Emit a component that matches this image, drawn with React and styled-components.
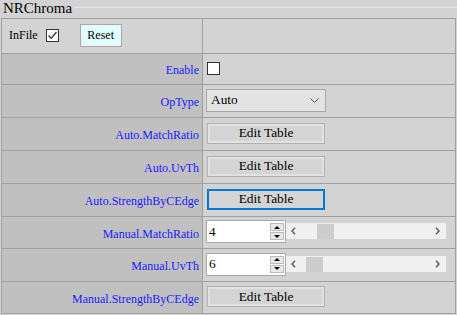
import React from "react";
import styled, { createGlobalStyle, css } from "styled-components";

const GlobalStyle = createGlobalStyle`
  body {
    margin: 0;
    background: #d3d3d3;
    font-family: "Liberation Serif", "Times New Roman", serif;
  }
  button {
    font-family: "Liberation Serif", "Times New Roman", serif;
  }
`;

const Header = styled.div`
  display: flex;
  align-items: flex-start;
  height: 18px;
`;

const Legend = styled.span`
  font-size: 15px;
  line-height: 16px;
  padding: 0 2px 0 3px;
  color: #000;
`;

const Rule = styled.div`
  flex: 1;
  margin-top: 7px;
  height: 1px;
  background: #e6e6e6;
`;

const Table = styled.div`
  display: flex;
  flex-direction: column;
  width: 455px;
  margin-left: 1px;
  border-top: 1px solid #a0a0a0;
  border-left: 1px solid #a0a0a0;
  box-sizing: border-box;
`;

const Row = styled.div`
  display: grid;
  grid-template-columns: 201px 253px;
  height: ${(p) => p.$h}px;
`;

const Cell = styled.div`
  display: flex;
  align-items: center;
  box-sizing: border-box;
  border-right: 1px solid #a0a0a0;
  border-bottom: 1px solid #a0a0a0;
`;

const LabelCell = styled(Cell)`
  justify-content: flex-end;
  padding: 3px 3px 0 0;
  font-size: 12px;
  color: #1a1aff;
  background: #c0c0c0;
`;

const HeadCell = styled(Cell)`
  padding: 0 0 2px 7px;
  font-size: 12px;
  color: #000;
  background: #d3d3d3;
`;

const ValueCell = styled(Cell)`
  padding: 0 0 2px 3px;
  background: #d3d3d3;
`;

const Check = styled.span`
  display: inline-flex;
  align-items: center;
  justify-content: center;
  width: 13px;
  height: 13px;
  box-sizing: border-box;
  border: 1px solid #333;
  background: #fff;
  margin-left: ${(p) => p.$ml || 0}px;
`;

const ResetButton = styled.button`
  width: 42px;
  height: 23px;
  margin-left: 21px;
  padding: 0;
  font-family: "Liberation Serif", "Times New Roman", serif;
  font-size: 12px;
  font-weight: normal;
  color: #000;
  background: #e0ffff;
  border: 1px solid #a9a9a9;
  box-shadow: inset 0 0 0 1px #f0f0f0;
`;

const TableButton = styled.button`
  width: 118px;
  height: 21px;
  margin-left: 1px;
  padding: 0;
  font-family: "Liberation Serif", "Times New Roman", serif;
  font-size: 13.33px;
  font-weight: normal;
  color: #000;
  background: #d4d4d4;
  border: 1px solid #b0b0b0;
  box-shadow: inset 0 0 0 2px #e2e2e2;
  ${(p) =>
    p.$focus &&
    css`
      border: 2px solid #0078d7;
      box-shadow: none;
    `}
`;

const Select = styled.div`
  display: flex;
  align-items: center;
  justify-content: space-between;
  width: 120px;
  height: 23px;
  box-sizing: border-box;
  padding: 0 6px 0 4px;
  font-size: 13.33px;
  color: #000;
  background: #e3e3e3;
  border: 1px solid #a9a9a9;
`;

const NumberBox = styled.div`
  display: flex;
  align-items: center;
  justify-content: space-between;
  width: 80px;
  height: 23px;
  box-sizing: border-box;
  padding: 0 1px 0 2px;
  font-size: 13.33px;
  color: #000;
  background: #fff;
  border: 1px solid #a9a9a9;
`;

const Spinner = styled.div`
  display: flex;
  flex-direction: column;
  gap: 1px;
`;

const SpinBtn = styled.span`
  display: flex;
  align-items: center;
  justify-content: center;
  width: 14px;
  height: 8px;
  box-sizing: border-box;
  background: #e8e8e8;
  border: 1px solid #bcbcbc;
`;

const Track = styled.div`
  position: relative;
  display: flex;
  align-items: center;
  justify-content: space-between;
  width: 160px;
  height: 16px;
  padding: 0 6px 0 5px;
  box-sizing: border-box;
  background: #f0f0f0;
  margin-bottom: 1px;
`;

const Thumb = styled.span`
  position: absolute;
  top: 1px;
  bottom: 0;
  width: 17px;
  background: #cdcdcd;
`;

const Chevron = ({ dir }) => (
  <svg width="5" height="8" viewBox="0 0 5 8">
    <path
      d={dir === "left" ? "M4 0.8 L1 4 L4 7.2" : "M1 0.8 L4 4 L1 7.2"}
      fill="none"
      stroke="#606060"
      strokeWidth="1.6"
    />
  </svg>
);

const Slider = ({ value, thumb }) => (
  <>
    <NumberBox>
      <span>{value}</span>
      <Spinner>
        <SpinBtn>
          <svg width="6" height="3" viewBox="0 0 6 3">
            <path d="M0 3 L3 0 L6 3 Z" fill="#000" />
          </svg>
        </SpinBtn>
        <SpinBtn>
          <svg width="6" height="3" viewBox="0 0 6 3">
            <path d="M0 0 L3 3 L6 0 Z" fill="#000" />
          </svg>
        </SpinBtn>
      </Spinner>
    </NumberBox>
    <Track>
      <Chevron dir="left" />
      <Thumb style={{ left: thumb }} />
      <Chevron dir="right" />
    </Track>
  </>
);

const rows = [
  { label: "Auto.MatchRatio", kind: "table", h: 33 },
  { label: "Auto.UvTh", kind: "table", h: 33 },
  { label: "Auto.StrengthByCEdge", kind: "table", h: 33, focus: true },
  { label: "Manual.MatchRatio", kind: "slider", h: 32, value: 4, thumb: 31 },
  { label: "Manual.UvTh", kind: "slider", h: 33, value: 6, thumb: 20 },
  { label: "Manual.StrengthByCEdge", kind: "table", h: 32 },
];

export default function App() {
  return (
    <>
      <GlobalStyle />
      <Header>
        <Legend>NRChroma</Legend>
        <Rule />
      </Header>
      <Table>
        <Row $h={35}>
          <HeadCell>
            InFile
            <Check $ml={8}>
              <svg width="11" height="11" viewBox="0 0 11 11">
                <path d="M1.5 5.5 L4.2 8.3 L9.5 2" fill="none" stroke="#333" strokeWidth="1.3" />
              </svg>
            </Check>
            <ResetButton>Reset</ResetButton>
          </HeadCell>
          <ValueCell />
        </Row>
        <Row $h={31}>
          <LabelCell>Enable</LabelCell>
          <ValueCell>
            <Check $ml={1} />
          </ValueCell>
        </Row>
        <Row $h={33}>
          <LabelCell>OpType</LabelCell>
          <ValueCell>
            <Select>
              <span>Auto</span>
              <svg width="9" height="5" viewBox="0 0 9 5">
                <path d="M0.5 0.5 L4.5 4.5 L8.5 0.5" fill="none" stroke="#555" strokeWidth="1" />
              </svg>
            </Select>
          </ValueCell>
        </Row>
        {rows.map((r) => (
          <Row key={r.label} $h={r.h}>
            <LabelCell>{r.label}</LabelCell>
            <ValueCell>
              {r.kind === "table" ? (
                <TableButton $focus={r.focus}>Edit Table</TableButton>
              ) : (
                <Slider value={r.value} thumb={r.thumb} />
              )}
            </ValueCell>
          </Row>
        ))}
      </Table>
    </>
  );
}
